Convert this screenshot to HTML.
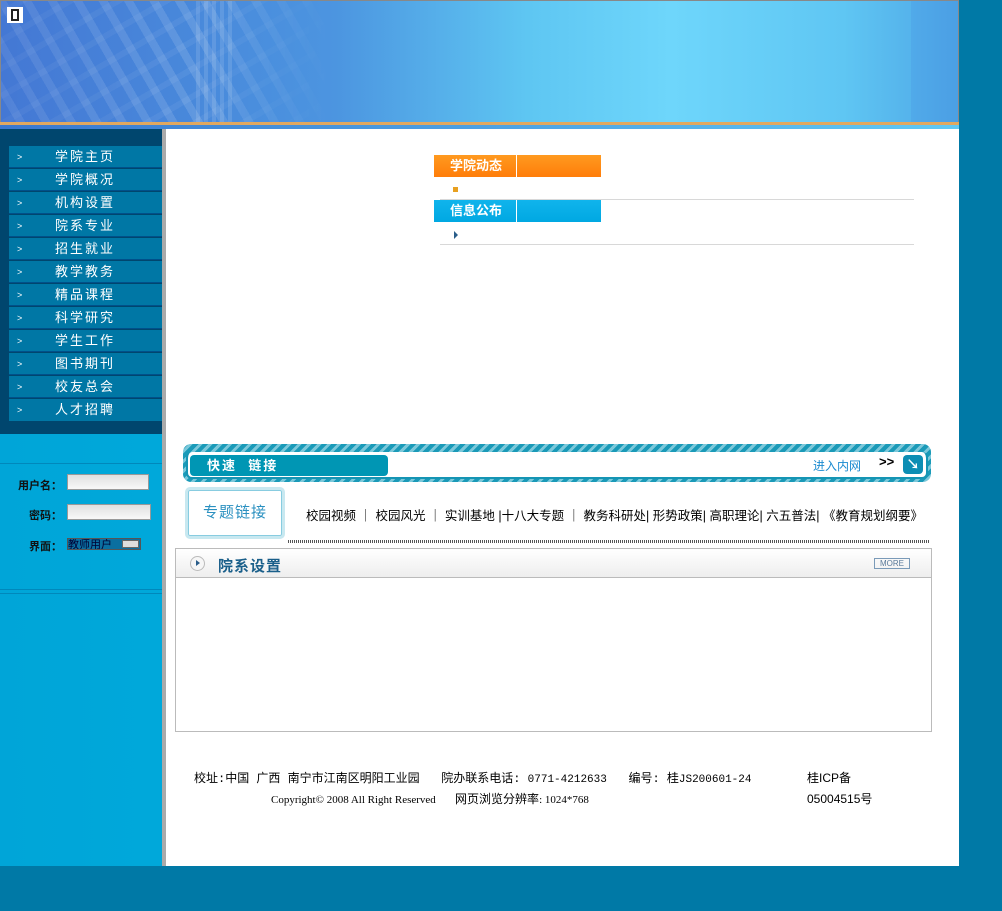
<!DOCTYPE html>
<html><head><meta charset="utf-8"><style>
*{margin:0;padding:0;box-sizing:border-box}
body{width:1002px;height:911px;background:#0079a6;position:relative;overflow:hidden;font-family:"Liberation Sans","Noto Sans CJK SC",sans-serif}
.a{position:absolute}
#hdr{left:0;top:0;width:959px;height:123px;border:1px solid #888;border-bottom:none;background:linear-gradient(90deg,#4478d4 0%,#4c95e0 35%,#5ec6f2 55%,#6ed6fb 70%,#5fc6f3 88%,#4ea6e6 100%);overflow:hidden}
#pat{left:0;top:0;width:330px;height:123px;background:repeating-linear-gradient(60deg,transparent 0 14px,rgba(255,255,255,.13) 14px 22px),repeating-linear-gradient(-30deg,transparent 0 18px,rgba(255,255,255,.06) 18px 24px);-webkit-mask-image:linear-gradient(90deg,rgba(0,0,0,.6),#000 60%,transparent)}
.str{position:absolute;top:0;height:123px;background:rgba(255,255,255,.12)}
#nav .it{position:absolute;left:9px;width:153px;height:22px;background:#0077a5;border-bottom:1px solid #00508a;color:#fff;font-size:13px;letter-spacing:2px;line-height:22px}
#nav .it span{position:absolute;left:8px;font-size:9px;letter-spacing:0}
#nav .it b{position:absolute;left:46px;font-weight:normal}
.lbl{color:#111;font-size:11px;font-weight:bold;text-align:right;width:60px}
.inp{background:linear-gradient(#e0e0e0,#f8f8f8);border:1px solid #999;height:16px}
.lk{font-size:12.5px;color:#000;top:505px;white-space:nowrap}
</style></head><body>
<div id="hdr" class="a">
<div id="pat" class="a"></div>
<div class="str" style="left:195px;width:4px"></div><div class="str" style="left:203px;width:4px"></div>
<div class="str" style="left:211px;width:4px"></div><div class="str" style="left:219px;width:4px"></div>
<div class="str" style="left:227px;width:4px"></div><div class="str" style="left:910px;width:48px;background:rgba(60,120,220,.15)"></div>
<div class="a" style="left:6px;top:6px;width:16px;height:16px;background:#fff;border:3px solid #fff"><div style="width:8px;height:12px;border:2px solid #222;margin:-1px 0 0 1px"></div></div>
</div>
<div class="a" style="left:0;top:122px;width:959px;height:3px;background:#e0a860"></div>
<div class="a" style="left:0;top:125px;width:959px;height:4px;background:linear-gradient(90deg,#3a78d0,#60c8f4)"></div>
<div class="a" style="left:0;top:129px;width:162px;height:305px;background:#00466e"></div>
<div class="a" style="left:0;top:434px;width:162px;height:432px;background:linear-gradient(90deg,#00a5d8,#00a8da)"></div>
<div class="a" style="left:0;top:463px;width:162px;height:1px;background:#0088bb"></div>
<div class="a" style="left:0;top:589px;width:162px;height:1px;background:#0088bb"></div>
<div class="a" style="left:0;top:593px;width:162px;height:1px;background:#0088bb"></div>
<div class="a" style="left:162px;top:129px;width:4px;height:737px;background:#aaa"></div>
<div class="a" style="left:166px;top:129px;width:793px;height:737px;background:#fff"></div>
<div id="nav">
<div class="it" style="top:146px"><span>&gt;</span><b>学院主页</b></div>
<div class="it" style="top:169px"><span>&gt;</span><b>学院概况</b></div>
<div class="it" style="top:192px"><span>&gt;</span><b>机构设置</b></div>
<div class="it" style="top:215px"><span>&gt;</span><b>院系专业</b></div>
<div class="it" style="top:238px"><span>&gt;</span><b>招生就业</b></div>
<div class="it" style="top:261px"><span>&gt;</span><b>教学教务</b></div>
<div class="it" style="top:284px"><span>&gt;</span><b>精品课程</b></div>
<div class="it" style="top:307px"><span>&gt;</span><b>科学研究</b></div>
<div class="it" style="top:330px"><span>&gt;</span><b>学生工作</b></div>
<div class="it" style="top:353px"><span>&gt;</span><b>图书期刊</b></div>
<div class="it" style="top:376px"><span>&gt;</span><b>校友总会</b></div>
<div class="it" style="top:399px;border-bottom:none"><span>&gt;</span><b>人才招聘</b></div>
</div>
<div class="a lbl" style="left:2px;top:477px">用户名：</div><div class="a inp" style="left:67px;top:474px;width:82px"></div>
<div class="a lbl" style="left:2px;top:507px">密码：</div><div class="a inp" style="left:67px;top:504px;width:84px"></div>
<div class="a lbl" style="left:2px;top:538px">界面：</div>
<div class="a" style="left:67px;top:538px;width:74px;height:12px;background:#0a6fa0;border:1px solid #555;font-size:11px;color:#003;line-height:12px;overflow:hidden">教师用户<span style="position:absolute;right:1px;top:1px;width:17px;height:8px;background:#ddd;border:1px solid #666"></span></div>
<!-- news -->
<div class="a" style="left:434px;top:155px;width:167px;height:22px;background:linear-gradient(#ff9a20,#ff7d0a);color:#fff;font-weight:bold;font-size:13px;line-height:22px;padding-left:16px">学院动态<div class="a" style="left:82px;top:0;width:1px;height:22px;background:#fff"></div></div>
<div class="a" style="left:453px;top:187px;width:5px;height:5px;background:#e8a020"></div>
<div class="a" style="left:440px;top:199px;width:474px;height:1px;background:#d8d8d8"></div>
<div class="a" style="left:434px;top:200px;width:167px;height:22px;background:linear-gradient(#10b4ec,#00a8e2);color:#fff;font-weight:bold;font-size:13px;line-height:22px;padding-left:16px">信息公布<div class="a" style="left:82px;top:0;width:1px;height:22px;background:#fff"></div></div>
<div class="a" style="left:454px;top:231px;width:0;height:0;border-left:4px solid #2a5d8a;border-top:4px solid transparent;border-bottom:4px solid transparent"></div>
<div class="a" style="left:440px;top:244px;width:474px;height:1px;background:#d8d8d8"></div>
<!-- quick links -->
<div class="a" style="left:183px;top:444px;width:748px;height:38px;border-radius:8px;background:repeating-linear-gradient(135deg,#1a9ab8 0 4px,#7cc8da 4px 7px)"></div>
<div class="a" style="left:186px;top:452px;width:742px;height:27px;border-radius:6px;background:#fff;border:2px solid #1595b4;border-top:none"></div>
<div class="a" style="left:190px;top:455px;width:198px;height:21px;border-radius:4px;background:#0096b4;color:#fff;font-weight:bold;font-size:13px;line-height:21px;padding-left:17px;letter-spacing:2px">快速&nbsp;&nbsp;链接</div>
<div class="a" style="left:813px;top:457px;font-size:12px;color:#1a8ad0">进入内网</div>
<div class="a" style="left:879px;top:454px;font-size:13px;color:#000;font-weight:bold">&gt;&gt;</div>
<div class="a" style="left:903px;top:455px;width:20px;height:19px;border-radius:4px;background:#0d8eb4;color:#fff;font-size:13px;text-align:center;line-height:19px;font-weight:bold">↘</div>
<div class="a" style="left:185px;top:487px;width:100px;height:52px;border:3px solid #c8e8f0;border-radius:5px;background:#fff;box-shadow:inset 0 0 0 1px #88cce0;color:#2a90c0;font-size:15px;text-align:center;line-height:46px;letter-spacing:1px">专题链接</div>
<div class="a lk" style="left:306px">校园视频 ｜ 校园风光 ｜ 实训基地 |十八大专题 ｜ 教务科研处| 形势政策| 高职理论| 六五普法| 《教育规划纲要》</div>
<div class="a" style="left:288px;top:540px;width:642px;height:3px;background:repeating-linear-gradient(90deg,#555 0 1px,transparent 1px 2px)"></div>
<!-- section -->
<div class="a" style="left:175px;top:548px;width:757px;height:184px;border:1px solid #bbb;background:#fff"></div>
<div class="a" style="left:176px;top:549px;width:755px;height:29px;background:linear-gradient(#fff,#eee);border-bottom:1px solid #bbb"></div>
<div class="a" style="left:190px;top:556px;width:15px;height:15px;border-radius:50%;border:1px solid #bbb;background:#f6f6f6"><div style="margin:3px 0 0 5px;width:0;height:0;border-left:4px solid #2a5d8a;border-top:3px solid transparent;border-bottom:3px solid transparent"></div></div>
<div class="a" style="left:218px;top:555px;font-size:15px;font-weight:bold;color:#1a5f8a;letter-spacing:1px">院系设置</div>
<div class="a" style="left:874px;top:558px;width:36px;height:11px;border:1px solid #7a9ab8;font-size:8px;color:#5a7a9a;text-align:center;line-height:9px">MORE</div>
<!-- footer -->
<div class="a" style="left:194px;top:769px;font-size:12px;color:#000;white-space:nowrap;font-family:'Liberation Mono','Noto Sans CJK SC',monospace">校址:中国 广西 南宁市江南区明阳工业园&nbsp;&nbsp;&nbsp;<span style="font-family:'Liberation Sans','Noto Sans CJK SC',sans-serif">院办联系电话</span>: <span style="font-size:11px">0771-4212633</span>&nbsp;&nbsp;&nbsp;编号: 桂<span style="font-size:11px">JS200601-24</span></div>
<div class="a" style="left:807px;top:769px;font-size:12px">桂ICP备</div>
<div class="a" style="left:271px;top:790px;font-size:11px;color:#000;white-space:nowrap;font-family:'Liberation Serif','Noto Sans CJK SC',serif">Copyright© 2008 All Right Reserved&nbsp;&nbsp;&nbsp;&nbsp;&nbsp;&nbsp;&nbsp;<span style="font-size:12px">网页浏览分辨率</span>: 1024*768</div>
<div class="a" style="left:807px;top:790px;font-size:12px">05004515号</div>
</body></html>
